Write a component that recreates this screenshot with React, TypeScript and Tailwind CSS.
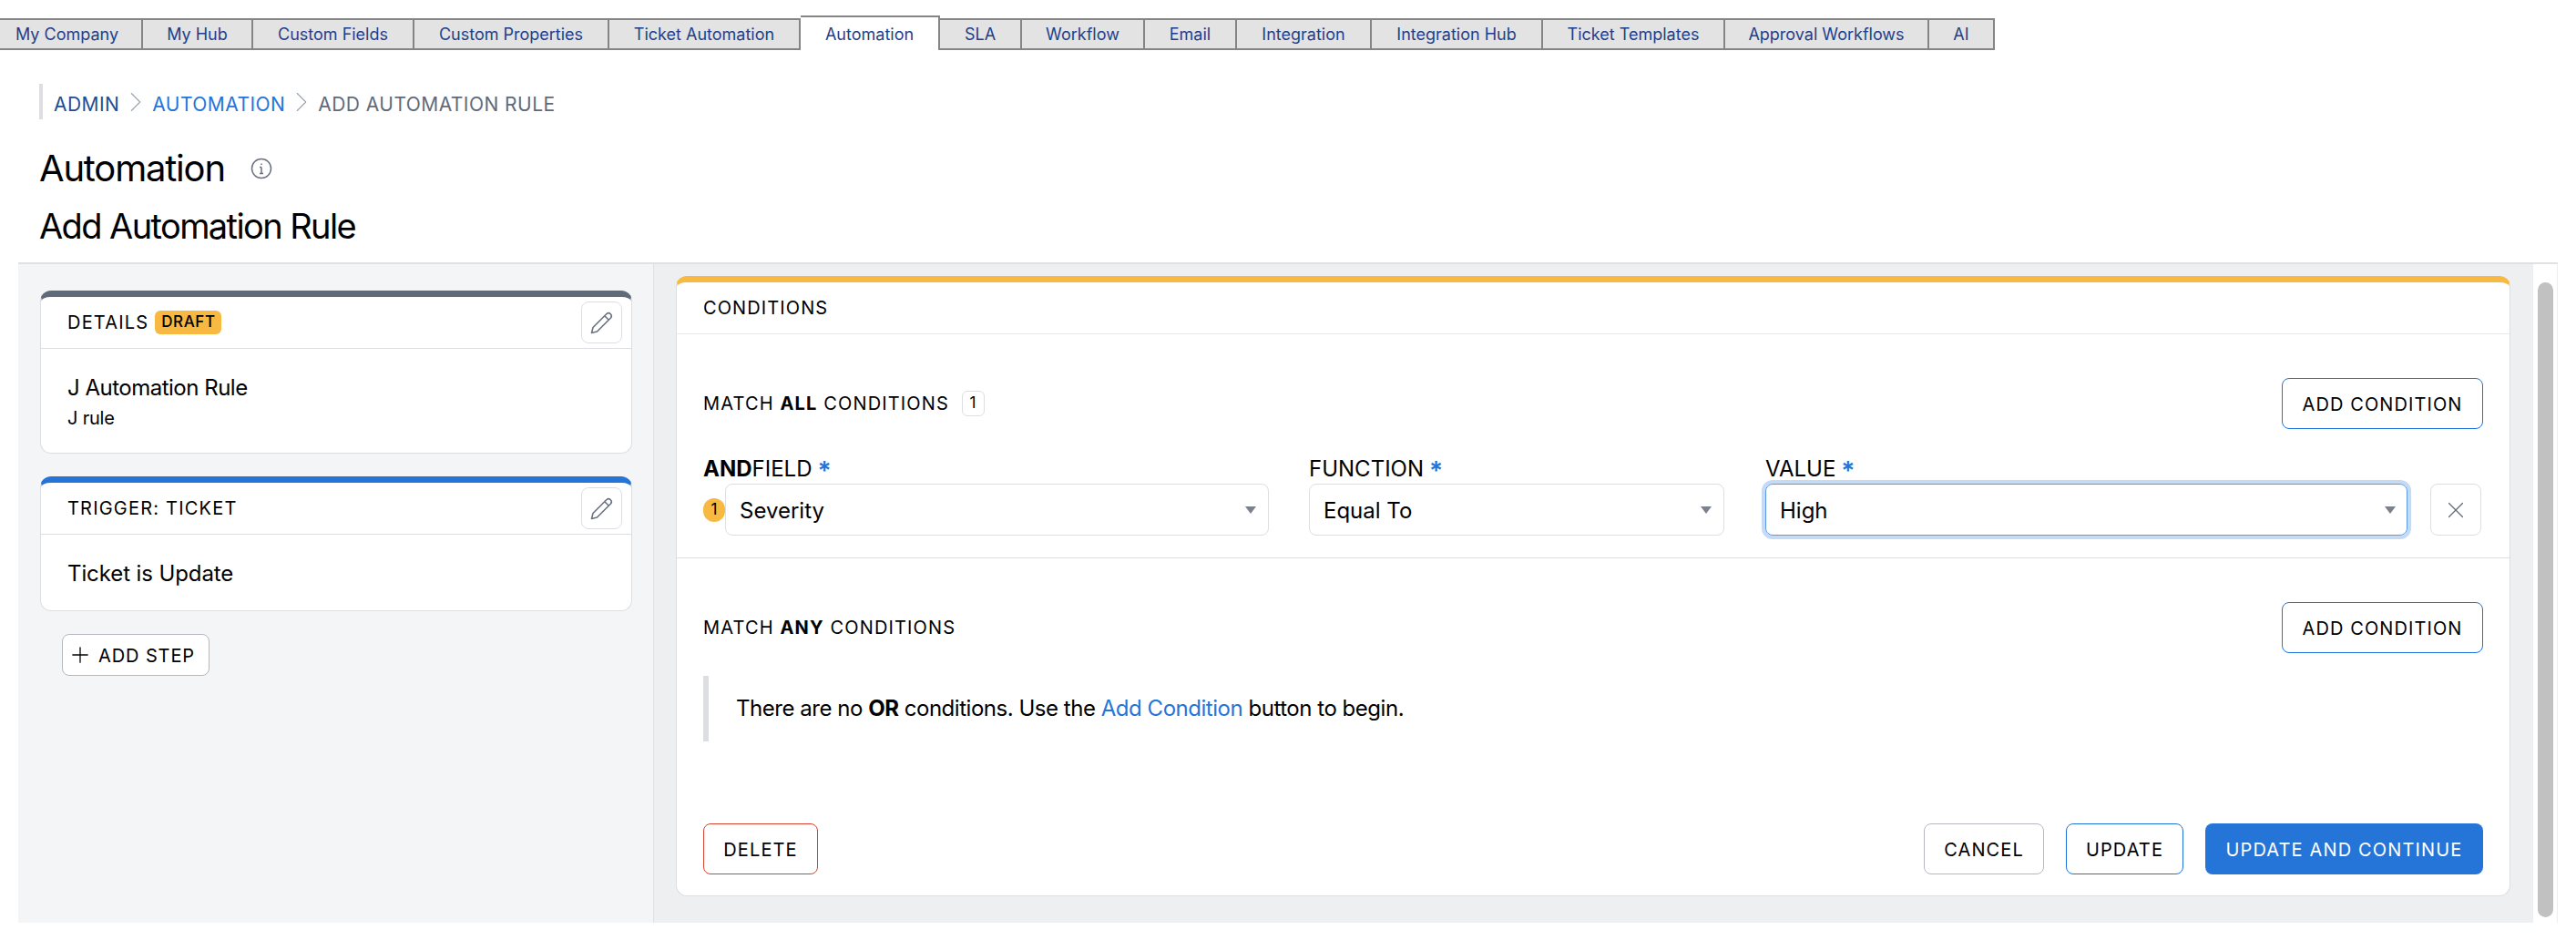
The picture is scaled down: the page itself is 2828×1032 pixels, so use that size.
import { ChevronRight, Plus, X } from "lucide-react";

const tabs = [
  { label: "My Company", width: "w-[157px] pr-[8px]" },
  { label: "My Hub", width: "w-[121px]" },
  { label: "Custom Fields", width: "w-[177px]" },
  { label: "Custom Properties", width: "w-[214px]" },
  { label: "Ticket Automation", width: "w-[210px]" },
  { label: "Automation", width: "w-[153px]", active: true },
  { label: "SLA", width: "w-[90px]" },
  { label: "Workflow", width: "w-[135px]" },
  { label: "Email", width: "w-[101px]" },
  { label: "Integration", width: "w-[148px]" },
  { label: "Integration Hub", width: "w-[188px]" },
  { label: "Ticket Templates", width: "w-[200px]" },
  { label: "Approval Workflows", width: "w-[224px]" },
  { label: "AI", width: "w-[72px]" },
];

function PencilIcon() {
  return (
    <svg width="26" height="26" viewBox="0 0 26 26" fill="none" stroke="#6b7280" strokeWidth="1.6" strokeLinejoin="round">
      <path d="M1.5 24.5 3 18.5 18 3.5a3.2 3.2 0 0 1 4.5 4.5L7.5 23z" />
      <path d="M15.8 5.7l4.5 4.5" />
    </svg>
  );
}

function Caret() {
  return <span className="h-0 w-0 border-x-[6.5px] border-t-[8px] border-x-transparent border-t-[#7c828c]" />;
}

function Required() {
  return <span className="ml-[6px] align-[-4px] text-[28px] leading-none font-semibold text-[#2575d8]">*</span>;
}

function Card({ bar, title, children }: { bar: string; title: React.ReactNode; children: React.ReactNode }) {
  return (
    <div className={`overflow-hidden rounded-xl border border-[#dcdee2] border-t-[7px] bg-white ${bar}`}>
      <div className="flex h-[57px] items-center justify-between border-b border-[#dcdee2] pl-[29px] pr-[10px]">
        <div className="flex items-center gap-[7px] text-[20px] tracking-[1.2px] text-black">{title}</div>
        <button className="flex h-[46px] w-[45px] items-center justify-center rounded-lg border border-[#dcdee2] bg-white">
          <PencilIcon />
        </button>
      </div>
      {children}
    </div>
  );
}

function OutlineButton({ border, children }: { border: string; children: React.ReactNode }) {
  return (
    <button className={`flex h-[56px] items-center justify-center rounded-lg border bg-white pt-[2px] text-[20px] tracking-[1.1px] text-black ${border}`}>
      {children}
    </button>
  );
}

export default function App() {
  return (
    <div className="h-[1032px] w-full overflow-hidden bg-white font-[Inter,sans-serif] text-black">
      {/* tabs */}
      <div className="flex h-[55px] items-end">
        {tabs.map((t) =>
          t.active ? (
            <div key={t.label} className={`flex h-[38px] items-center justify-center border-r-2 border-t-2 border-[#858585] bg-white text-[18px] text-[#1f3f8a] ${t.width}`}>
              {t.label}
            </div>
          ) : (
            <div key={t.label} className={`flex h-[35px] items-center justify-center border-y-2 border-r-2 border-[#858585] bg-[#e3e3e3] text-[18px] text-[#1f3f8a] ${t.width}`}>
              {t.label}
            </div>
          ),
        )}
      </div>

      {/* breadcrumb and titles */}
      <div className="pl-[43px]">
        <div className="mt-[37px] flex h-[39px] items-center border-l-4 border-[#dcdee2] pl-3 pt-[7px] text-[21px] tracking-[0.45px]">
          <span className="text-[#1f4e94]">ADMIN</span>
          <ChevronRight size={38} strokeWidth={0.7} className="-mx-px -mt-[7px] text-[#9ca3af]" />
          <span className="text-[#2575d8]">AUTOMATION</span>
          <ChevronRight size={38} strokeWidth={0.7} className="-mx-px -mt-[7px] text-[#9ca3af]" />
          <span className="text-[#5f6b7a]">ADD AUTOMATION RULE</span>
        </div>
        <div className="mt-[32px] flex h-[44px] items-center">
          <h1 className="text-[40px] leading-[44px] font-normal tracking-[-1.2px]">Automation</h1>
          <svg className="ml-[28px]" width="24" height="24" viewBox="0 0 24 24" fill="none" stroke="#6b7280" strokeWidth="1.5">
            <circle cx="12" cy="12" r="10.5" />
            <path d="M12 10.5v7M10 10.5h2M10 17.5h4M12 6.5v1.5" />
          </svg>
        </div>
        <h2 className="mt-[19px] text-[38px] leading-[44px] font-normal tracking-[-1.6px]">Add Automation Rule</h2>
      </div>

      {/* workspace */}
      <div className="mt-[18px] ml-[20px] flex h-[725px] w-[2788px] border-t-2 border-[#dfe1e5]">
        <aside className="w-[698px] shrink-0 border-r border-[#dfe1e5] bg-[#f4f5f7] pl-[24px] pr-[23px] pt-[29px]">
          <Card
            bar="border-t-[#5f6b7a]"
            title={
              <>
                DETAILS
                <span className="flex h-[26px] w-[73px] items-center justify-center rounded-md bg-[#f7b941] text-[17px] font-medium tracking-[0.6px]">DRAFT</span>
              </>
            }
          >
            <div className="px-[29px] pb-[24px] pt-[28px]">
              <div className="text-[24px] leading-[30px] tracking-[-0.5px]">J Automation Rule</div>
              <div className="mt-[4px] text-[20px] leading-[28px] tracking-[-0.2px]">J rule</div>
            </div>
          </Card>
          <div className="mt-[25px]">
            <Card bar="border-t-[#2575d8]" title="TRIGGER: TICKET">
              <div className="px-[29px] pb-[25px] pt-[28px] text-[24px] leading-[30px] tracking-[-0.1px]">Ticket is Update</div>
            </Card>
          </div>
          <button className="ml-[24px] mt-[25px] flex h-[46px] w-[162px] items-center gap-[6px] rounded-lg border border-[#b5b8c0] bg-white pl-[5px] text-[20px] tracking-[0.9px]">
            <Plus size={28} strokeWidth={1.1} />
            <span className="pt-[2px]">ADD STEP</span>
          </button>
        </aside>

        <main className="flex-1 bg-[#eeeff1] px-[24px] pb-[29px] pt-[13px]">
          <div className="h-[681px] rounded-xl border border-[#dcdee2] border-t-[7px] border-t-[#f7b941] bg-white">
            <div className="flex h-[57px] items-center border-b border-[#e8e9ec] pl-[29px] text-[20px] tracking-[1.1px]">CONDITIONS</div>

            {/* match all */}
            <div className="border-b border-[#dcdee2] px-[29px] pb-[24px] pt-[48px]">
              <div className="flex h-[56px] items-center justify-between">
                <div className="flex items-center gap-[14px] text-[20px] tracking-[1.15px]">
                  <span>
                    MATCH <b className="font-bold">ALL</b> CONDITIONS
                  </span>
                  <span className="flex h-[28px] w-[25px] items-center justify-center rounded-md border border-[#dcdee2] text-[17px]">1</span>
                </div>
                <OutlineButton border="w-[221px] border-[#1f72dc]">ADD CONDITION</OutlineButton>
              </div>
              <div className="mt-[27px] flex">
                <div className="w-[621px]">
                  <div className="h-[30px] pt-[2px] text-[24px] leading-[30px]">
                    <b className="font-bold">AND</b>FIELD
                    <Required />
                  </div>
                  <div className="mt-[3px] flex items-center">
                    <span className="flex h-[26px] w-[24px] items-center justify-center rounded-full bg-[#f7b941] text-[17px]">1</span>
                    <div className="flex h-[57px] flex-1 items-center justify-between rounded-lg border border-[#dcdee2] pl-[15px] pr-[13px] text-[24px]">
                      <span className="pt-[2px]">Severity</span>
                      <Caret />
                    </div>
                  </div>
                </div>
                <div className="ml-[44px] w-[456px]">
                  <div className="h-[30px] pt-[2px] text-[24px] leading-[30px]">
                    FUNCTION
                    <Required />
                  </div>
                  <div className="mt-[3px] flex h-[57px] items-center justify-between rounded-lg border border-[#dcdee2] pl-[15px] pr-[13px] text-[24px]">
                    <span className="pt-[2px]">Equal To</span>
                    <Caret />
                  </div>
                </div>
                <div className="ml-[45px] w-[705px]">
                  <div className="h-[30px] pt-[2px] text-[24px] leading-[30px]">
                    VALUE
                    <Required />
                  </div>
                  <div className="mt-[3px] flex h-[57px] items-center justify-between rounded-lg border border-[#5b9be6] pl-[15px] pr-[12px] text-[24px] shadow-[0_0_0_4px_#c5dbf5]">
                    <span className="pt-[2px]">High</span>
                    <Caret />
                  </div>
                </div>
                <button className="ml-[25px] mt-[33px] flex h-[57px] w-[56px] items-center justify-center rounded-lg border border-[#dcdee2] text-[#5f6b7a]">
                  <X size={30} strokeWidth={1} />
                </button>
              </div>
            </div>

            {/* match any */}
            <div className="px-[29px] pt-[48px]">
              <div className="flex h-[56px] items-center justify-between">
                <div className="text-[20px] tracking-[1.15px]">
                  MATCH <b className="font-bold">ANY</b> CONDITIONS
                </div>
                <OutlineButton border="w-[221px] border-[#1f72dc]">ADD CONDITION</OutlineButton>
              </div>
              <div className="mt-[25px] flex h-[72px] items-center border-l-[6px] border-[#dcdee2] pl-[30px] text-[24px] tracking-[-0.47px]">
                <span>
                  There are no <b className="font-bold">OR</b> conditions. Use the <span className="text-[#2575d8]">Add Condition</span> button to begin.
                </span>
              </div>
              <div className="mt-[90px] flex items-center">
                <OutlineButton border="w-[126px] border-[#d8412f]">DELETE</OutlineButton>
                <div className="ml-auto flex gap-[24px]">
                  <OutlineButton border="w-[132px] border-[#b5b8c0]">CANCEL</OutlineButton>
                  <OutlineButton border="w-[129px] border-[#1f72dc]">UPDATE</OutlineButton>
                  <button className="h-[56px] w-[305px] rounded-lg bg-[#2575d8] pt-[2px] text-[20px] tracking-[1.15px] text-white">UPDATE AND CONTINUE</button>
                </div>
              </div>
            </div>
          </div>
        </main>

        {/* scrollbar */}
        <div className="w-[28px] shrink-0 border-x border-[#eceef0] bg-white pl-[5px] pt-[20px]">
          <div className="h-[697px] w-[17px] rounded-full bg-[#c1c1c1]" />
        </div>
      </div>
    </div>
  );
}
